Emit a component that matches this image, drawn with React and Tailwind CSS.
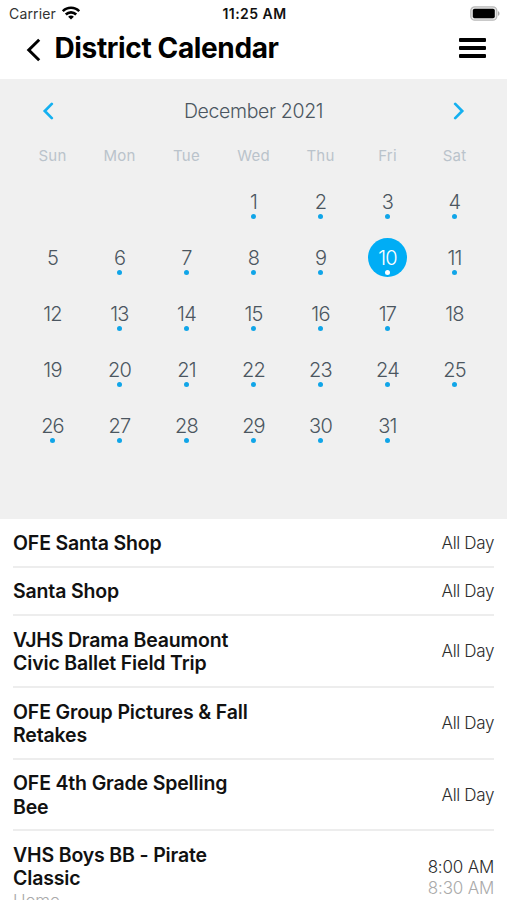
const DAYS = ["Sun", "Mon", "Tue", "Wed", "Thu", "Fri", "Sat"];
const WITHOUT_EVENTS = [5, 12, 18, 19];
const FIRST_WEEKDAY = 3;
const SELECTED = 10;

const EVENTS = [
  { lines: ["OFE Santa Shop"], height: "h-[49px]" },
  { lines: ["Santa Shop"], height: "h-[48px]" },
  { lines: ["VJHS Drama Beaumont", "Civic Ballet Field Trip"], height: "h-[72px]" },
  { lines: ["OFE Group Pictures & Fall", "Retakes"], height: "h-[72px]" },
  { lines: ["OFE 4th Grade Spelling", "Bee"], height: "h-[71px]" },
];

function StatusBar() {
  return (
    <div className="flex h-7 shrink-0 items-center justify-between pl-[9px] pr-[7px] text-[14px] leading-7">
      <div className="flex w-[160px] items-center gap-[6px]">
        <span className="tracking-[0.15px] text-[#333]">Carrier</span>
        <svg width="18" height="14" viewBox="0 0 18 14" fill="none" stroke="#000" strokeWidth="2.6" className="mb-[3px]">
          <path d="M.8 5.200C5.200.6 12.800.6 17.200 5.200" />
          <path d="M3.800 8.500c2.900-2.900 7.500-2.900 10.400 0" />
          <path d="M9 13.600 6.100 10.700c1.600-1.500 4.200-1.500 5.800 0z" fill="#000" stroke="none" />
        </svg>
      </div>
      <span className="font-semibold tracking-[0.45px] text-[#111]">11:25 AM</span>
      <div className="flex w-[160px] justify-end">
        <svg width="31" height="15" viewBox="0 0 31 15" className="mb-[1px]">
          <rect x="1.800" y="0.800" width="26" height="13.400" rx="4" fill="#e8e8e8" stroke="#b9b9b9" strokeWidth="1.300" />
          <rect x="3.800" y="2.800" width="22" height="9.400" rx="1.800" fill="#000" />
          <path d="M29 5.200c2 .7 2 3.900 0 4.600z" fill="#aaa" />
        </svg>
      </div>
    </div>
  );
}

function Header() {
  return (
    <header className="flex h-[51px] shrink-0 items-start pl-[25px] pr-[21px]">
      <svg width="16" height="24" viewBox="0 0 16 24" fill="none" stroke="#000" strokeWidth="3" className="mt-[10px]">
        <path d="M14.200 1.800 3.800 12l10.400 10.200" />
      </svg>
      <h1 className="ml-[13.500px] mt-1 whitespace-nowrap text-[28px] font-bold leading-8 tracking-[-0.36px] text-black">District Calendar</h1>
      <div className="ml-auto mt-[10px] flex w-[27px] flex-col gap-1">
        <span className="h-1 rounded-[1px] bg-black" />
        <span className="h-1 rounded-[1px] bg-black" />
        <span className="h-1 rounded-[1px] bg-black" />
      </div>
    </header>
  );
}

function Arrow({ flip }) {
  return (
    <svg width="12" height="18" viewBox="0 0 12 18" fill="none" stroke="#14b0f0" strokeWidth="2.700" strokeLinecap="round" className={flip ? "rotate-180" : ""}>
      <path d="M9.800 1.900 2.800 9l7 7.100" />
    </svg>
  );
}

function Day({ day }) {
  const selected = day === SELECTED;
  return (
    <div className="flex h-[56.2px] items-center justify-center">
      <div className={"flex size-[39px] flex-col items-center rounded-full pt-2 " + (selected ? "bg-[#00adf5] text-white" : "text-[#4b5660]")}>
        <span className="text-[20px] font-[350] leading-6 tracking-[-0.8px]">{day}</span>
        {!WITHOUT_EVENTS.includes(day) && (
          <span className={"size-[5px] rounded-full " + (selected ? "bg-white" : "bg-[#10a5e8]")} />
        )}
      </div>
    </div>
  );
}

function Calendar() {
  return (
    <section className="h-[440px] shrink-0 bg-[#f0f0f0] px-[19px]">
      <div className="flex h-[63px] items-center justify-between px-[23px]">
        <Arrow />
        <h2 className="pt-[2px] text-[19.5px] font-[350] tracking-[-0.35px] text-[#4b5660]">December 2021</h2>
        <Arrow flip />
      </div>
      <div className="grid h-[31px] grid-cols-7 pt-[3px] text-center text-[15px] leading-[22px] tracking-[0.2px] text-[#bac3cb]">
        {DAYS.map((d) => <span key={d}>{d}</span>)}
      </div>
      <div className="grid grid-cols-7">
        {Array.from({ length: FIRST_WEEKDAY }, (_, i) => <span key={"blank" + i} />)}
        {Array.from({ length: 31 }, (_, i) => <Day key={i} day={i + 1} />)}
      </div>
    </section>
  );
}

function Title({ lines }) {
  return (
    <h3 className="text-[19.5px] font-semibold leading-[23.300px] tracking-[-0.16px] text-[#111]">
      {lines.map((line) => <span key={line} className="block whitespace-nowrap">{line}</span>)}
    </h3>
  );
}

export default function App() {
  return (
    <main className="flex h-[900px] w-[507px] flex-col overflow-hidden bg-white font-['Inter',sans-serif]">
      <StatusBar />
      <Header />
      <Calendar />
      <section className="px-[13px]">
        {EVENTS.map((e) => (
          <article key={e.lines[0]} className={"flex items-center justify-between border-b-2 border-[#ededed] pt-[2px] " + e.height}>
            <Title lines={e.lines} />
            <span className="text-[17px] font-[350] tracking-[-0.35px] text-[#2c2c2c]">All Day</span>
          </article>
        ))}
        <article className="flex justify-between pt-[13px]">
          <div>
            <Title lines={["VHS Boys BB - Pirate", "Classic"]} />
            <p className="text-[17px] font-[350] leading-5 tracking-[-0.15px] text-[#aaa]">Home</p>
          </div>
          <div className="pt-[13px] text-right text-[17px] font-[350] leading-[21px] tracking-[-0.2px]">
            <p className="text-[#2c2c2c]">8:00 AM</p>
            <p className="text-[#aaa]">8:30 AM</p>
          </div>
        </article>
      </section>
    </main>
  );
}
